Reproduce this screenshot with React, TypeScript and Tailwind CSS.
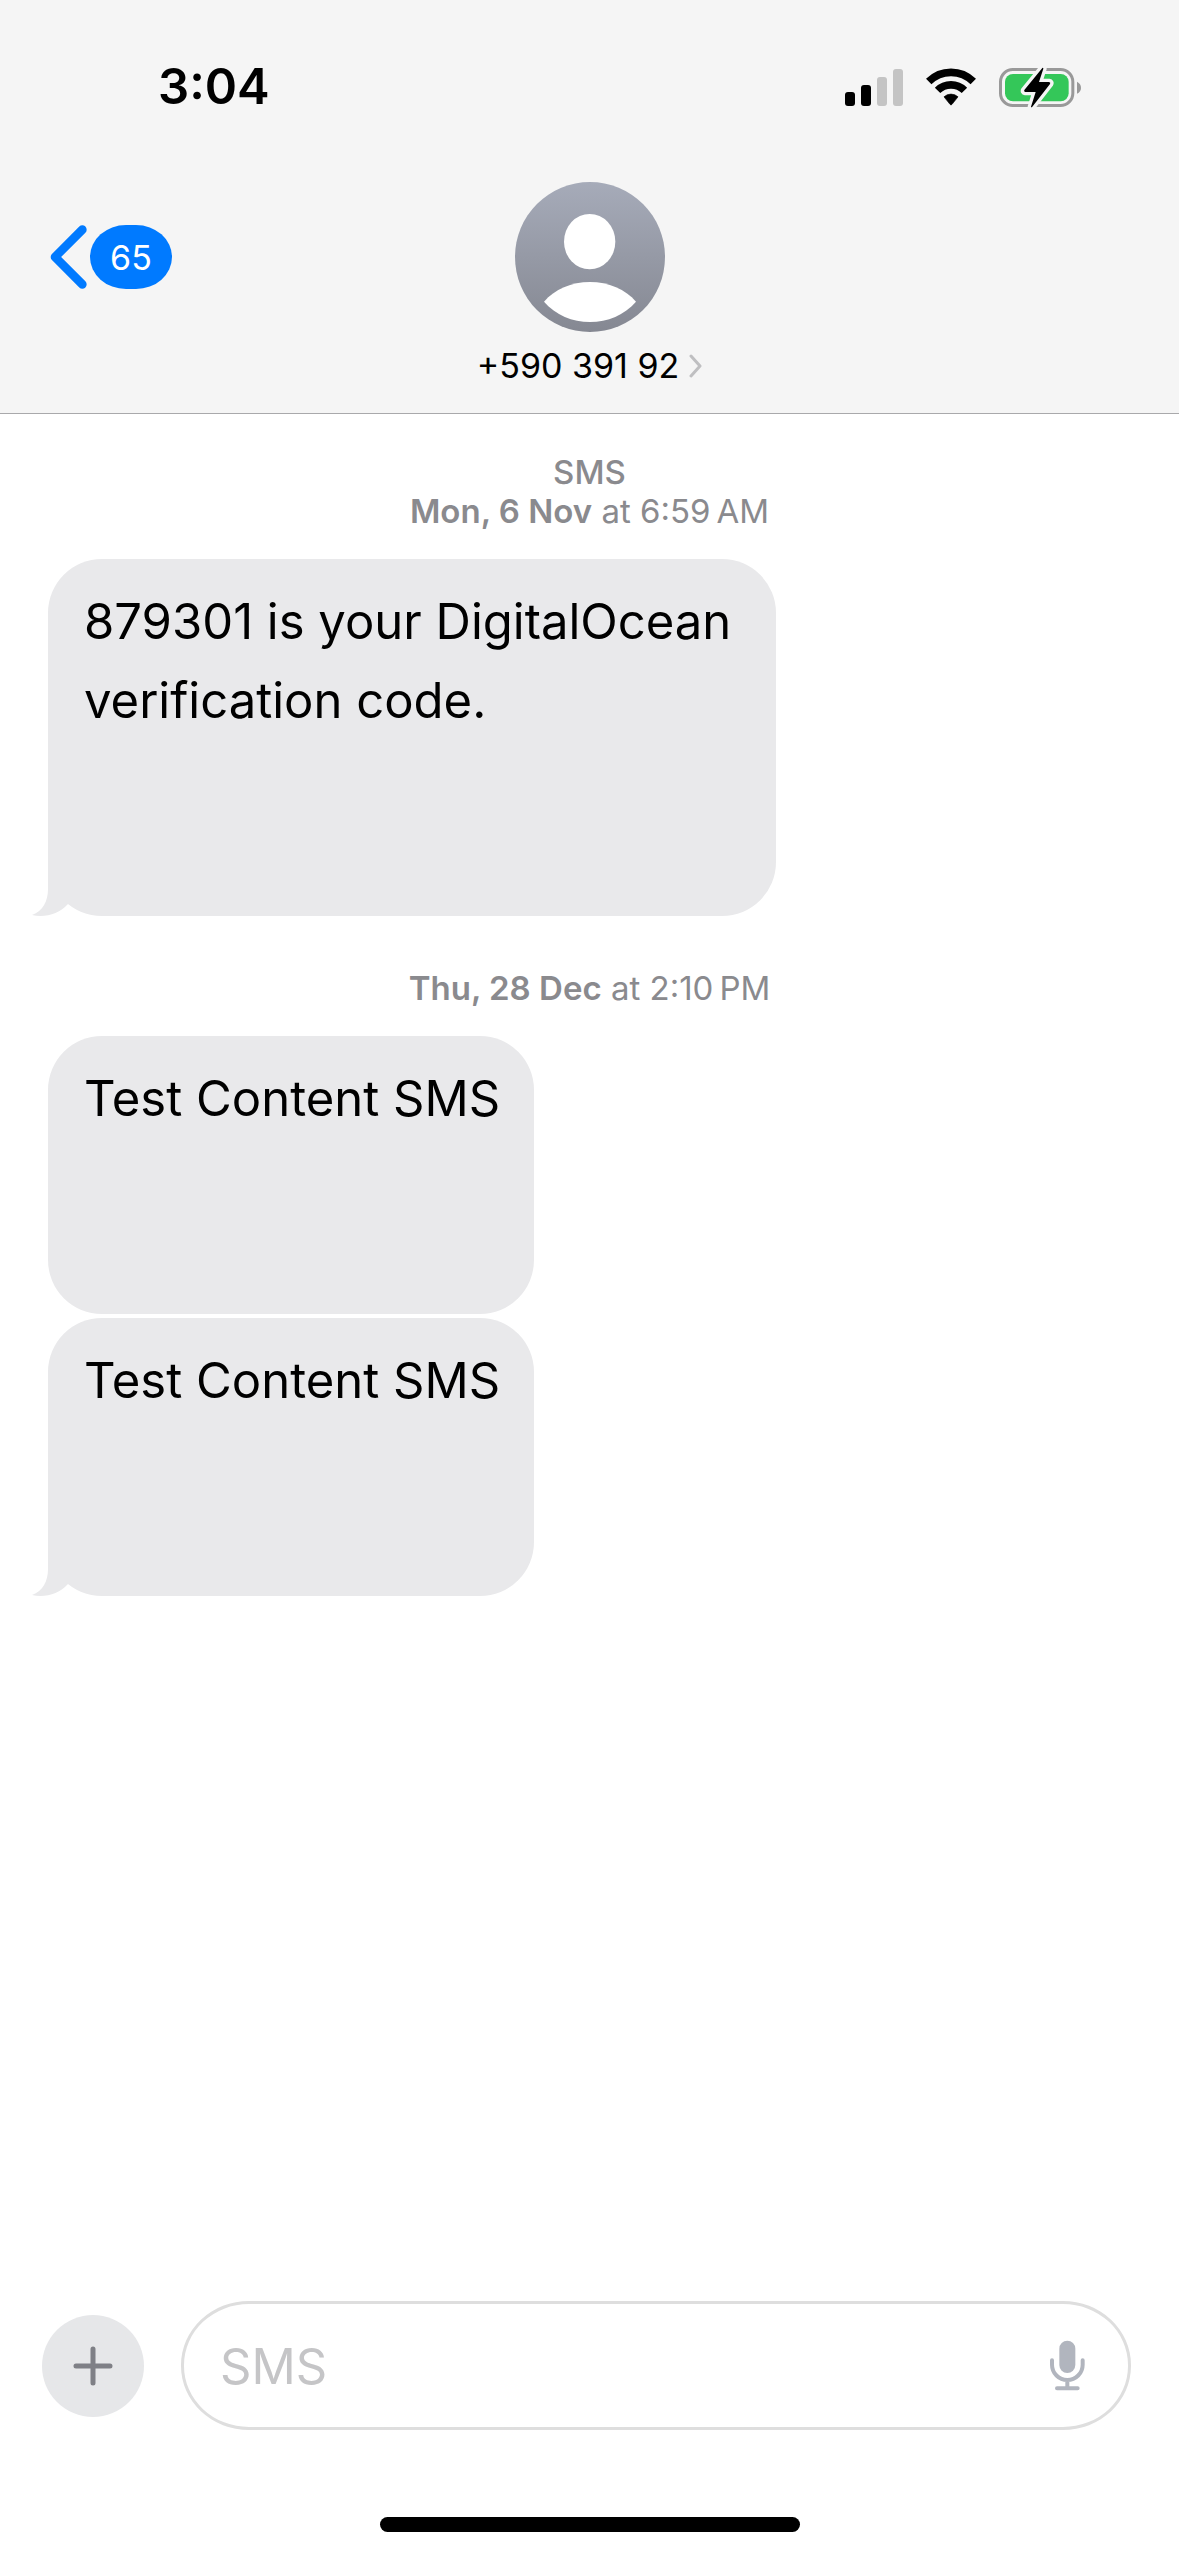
type Message = { text: string; blankLines: number; tail: boolean };
type Thread = { service?: string; day: string; time: string; period: string; messages: Message[] };

const threads: Thread[] = [
  {
    service: "SMS",
    day: "Mon, 6 Nov",
    time: "6:59",
    period: "AM",
    messages: [
      { text: "879301 is your DigitalOcean verification code.", blankLines: 2, tail: true },
    ],
  },
  {
    day: "Thu, 28 Dec",
    time: "2:10",
    period: "PM",
    messages: [
      { text: "Test Content SMS", blankLines: 2, tail: false },
      { text: "Test Content SMS", blankLines: 2, tail: true },
    ],
  },
];

function SignalIcon() {
  return (
    <svg width="58" height="37" viewBox="0 0 174 111" aria-label="Signal strength">
      <rect x="0" y="69" width="30" height="42" rx="9" />
      <rect x="48" y="48" width="30" height="63" rx="9" />
      <rect x="96" y="24" width="30" height="87" rx="9" fill="#c4c4c4" />
      <rect x="144" y="0" width="30" height="111" rx="9" fill="#c4c4c4" />
    </svg>
  );
}

function WifiIcon() {
  return (
    <svg width="50" height="38" viewBox="0 0 150 114" aria-label="Wi-Fi">
      <g fill="none" stroke="#000" strokeWidth="23">
        <path d="M8.2 40.7A94.5 94.5 0 0 1 141.8 40.7" />
        <path d="M34.7 67.2A57 57 0 0 1 115.3 67.2" />
      </g>
      <path d="M54 86.5A31 31 0 0 1 96 86.5L78 109Q75 113 72 109Z" stroke="#000" strokeWidth="2" strokeLinejoin="round" />
    </svg>
  );
}

function BatteryIcon() {
  const bolt = "M130 6L76 72Q73 77 79 78H110L96 122Q96 126 100 122L153 54Q156 49 150 48H120L133 8Q133 4 130 6Z";
  return (
    <svg width="82" height="43" viewBox="0 0 246 129" aria-label="Battery charging">
      <rect x="4.5" y="10.5" width="217" height="108" rx="37" fill="none" stroke="#999" strokeWidth="9" />
      <path d="M234 47Q246 53 246 65T234 83Z" fill="#999" />
      <rect x="18" y="24" width="191" height="82" rx="24" fill="#34c759" />
      <path d={bolt} fill="#f5f5f5" stroke="#f5f5f5" strokeWidth="20" strokeLinejoin="round" />
      <path d={bolt} fill="#000" />
    </svg>
  );
}

function Avatar() {
  return (
    <svg width="150" height="150" viewBox="0 0 450 450" aria-hidden="true">
      <defs>
        <linearGradient id="avatar-fill" x1="0" y1="0" x2="0" y2="1">
          <stop offset="0" stopColor="#a6abb9" />
          <stop offset="1" stopColor="#858892" />
        </linearGradient>
      </defs>
      <circle cx="225" cy="225" r="225" fill="url(#avatar-fill)" />
      <ellipse cx="224" cy="179" rx="77" ry="83" fill="#fff" />
      <path d="M87 359C118 322 170 300 225 300C280 300 332 322 363 359C328 399 278 420 225 420C172 420 122 399 87 359Z" fill="#fff" />
    </svg>
  );
}

function Tail() {
  return (
    <svg className="absolute bottom-0 -left-4" width="68" height="60" viewBox="-16 -60 68 60" aria-hidden="true">
      <path d="M0 -60V-27C0 -15 -5 -5 -16 -1C-3 2 11 -2 20 -12L40 -30V-60Z" fill="#e9e9eb" />
    </svg>
  );
}

function Bubble({ message }: { message: Message }) {
  return (
    <li className="relative max-w-[728px] self-start rounded-[54px] bg-[#e9e9eb] pt-[23px] pr-[34px] pb-[18px] pl-9 text-[49px] leading-[79px]">
      <p>{message.text}</p>
      {Array.from({ length: message.blankLines }, (_, i) => (
        <br key={i} />
      ))}
      {message.tail && <Tail />}
    </li>
  );
}

export default function App() {
  return (
    <div className="flex min-h-screen flex-col bg-white font-['Inter','Liberation_Sans',sans-serif] text-black">
      <header className="border-b border-[#a9a9ab] bg-[#f5f5f5] pb-[27px]">
        <div className="flex items-center justify-between pt-[57px] pr-[98px] pl-[158px]">
          <time className="text-[49px] leading-[60px] font-semibold">3:04</time>
          <div className="flex items-center gap-[23px]">
            <SignalIcon />
            <WifiIcon />
            <BatteryIcon />
          </div>
        </div>
        <div className="mt-[65px] grid grid-cols-[1fr_auto_1fr] items-start">
          <div className="flex h-[150px] items-center pl-[50px]">
            <button type="button" aria-label="Back, 65 unread" className="flex items-center gap-[3px]">
              <svg width="37" height="64" viewBox="0 0 111 192" aria-hidden="true">
                <path d="M97 14L15 96L97 178" fill="none" stroke="#007aff" strokeWidth="26" strokeLinecap="round" strokeLinejoin="round" />
              </svg>
              <span className="flex h-16 w-[82px] items-center justify-center rounded-[36px/32px] bg-[#007aff] text-[34px] text-white">65</span>
            </button>
          </div>
          <button type="button" className="flex flex-col items-center">
            <Avatar />
            <span className="mt-3.5 flex items-center gap-2.5 text-[34px] leading-10">
              +590 391 92
              <svg width="13" height="24" viewBox="0 0 13 24" aria-hidden="true">
                <path d="M2 2L11 12L2 22" fill="none" stroke="#bfbfc1" strokeWidth="3" strokeLinecap="round" strokeLinejoin="round" />
              </svg>
            </span>
          </button>
        </div>
      </header>

      <main className="flex flex-1 flex-col gap-[53px] pt-[39px]">
        {threads.map((thread) => (
          <section key={thread.day} className="flex flex-col gap-7">
            <div className="text-center text-[33px] leading-[39px] text-[#8a8a8e]">
              {thread.service && <p className="font-medium">{thread.service}</p>}
              <p>
                <span className="font-semibold">{thread.day}</span> at {thread.time}
                {"\u2009"}
                {thread.period}
              </p>
            </div>
            <ul className="flex flex-col gap-1 px-12">
              {thread.messages.map((message, i) => (
                <Bubble key={i} message={message} />
              ))}
            </ul>
          </section>
        ))}
      </main>

      <footer className="pb-6">
        <form className="flex items-center gap-[37px] pr-12 pl-[42px]" onSubmit={(e) => e.preventDefault()}>
          <button type="button" aria-label="Add attachment" className="flex size-[102px] shrink-0 items-center justify-center rounded-full bg-[#e6e7e9]">
            <svg width="40" height="40" viewBox="0 0 40 40" aria-hidden="true">
              <path d="M20 3V37M3 20H37" fill="none" stroke="#7f8086" strokeWidth="5" strokeLinecap="round" />
            </svg>
          </button>
          <div className="flex h-[129px] flex-1 items-center rounded-[68px/64px] border-3 border-[#dedede] pr-[43px] pl-9">
            <input
              type="text"
              aria-label="Message"
              placeholder="SMS"
              className="min-w-0 flex-1 bg-transparent pt-0.5 text-[49px] leading-[60px] outline-none placeholder:text-[#c5c5c7]"
            />
            <button type="button" aria-label="Dictate">
              <svg width="35" height="51" viewBox="0 0 105 153" aria-hidden="true">
                <rect x="28" y="2" width="48" height="97" rx="24" fill="#b1b5be" />
                <path d="M6 61V74A46 46 0 0 0 98 74V61M52 120V145M21 145H83" fill="none" stroke="#b1b5be" strokeWidth="12" strokeLinecap="round" />
              </svg>
            </button>
          </div>
        </form>
        <div className="mx-auto mt-[87px] h-[15px] w-[420px] rounded-full bg-black" />
      </footer>
    </div>
  );
}
